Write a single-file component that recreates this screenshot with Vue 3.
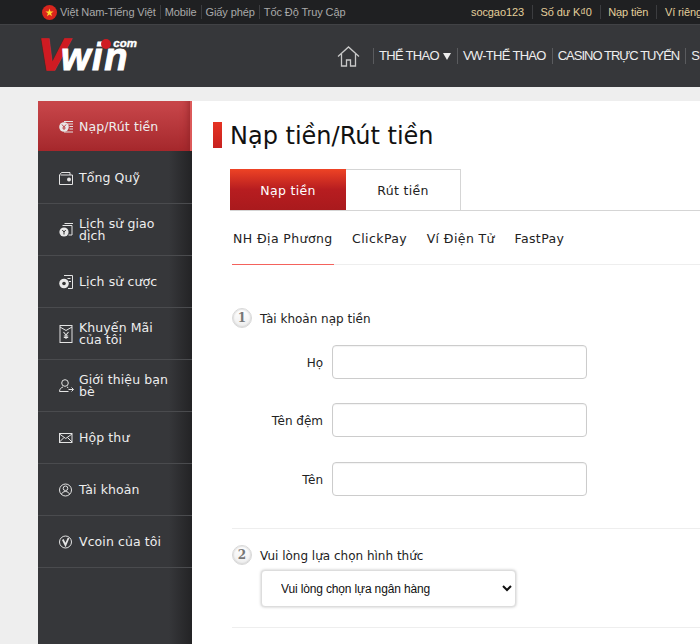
<script setup>
const topLeft = ['Việt Nam-Tiếng Việt', 'Mobile', 'Giấy phép', 'Tốc Độ Truy Cập']
const topRight = ['socgao123', 'Số dư K₫0', 'Nạp tiền', 'Ví riêng']
const nav = ['VW-THỂ THAO', 'CASINO TRỰC TUYẾN', 'SLOT GAME']
const menu = [
  { id: 'pay', label: 'Nạp/Rút tiền', active: true },
  { id: 'wallet', label: 'Tổng Quỹ' },
  { id: 'history', label: 'Lịch sử giao dịch' },
  { id: 'bets', label: 'Lịch sử cược' },
  { id: 'promo', label: 'Khuyến Mãi của tôi' },
  { id: 'refer', label: 'Giới thiệu bạn bè' },
  { id: 'mail', label: 'Hộp thư' },
  { id: 'account', label: 'Tài khoản' },
  { id: 'vcoin', label: 'Vcoin của tôi' }
]
const subs = ['NH Địa Phương', 'ClickPay', 'Ví Điện Tử', 'FastPay']
const fields = ['Họ', 'Tên đệm', 'Tên']
</script>

<template>
  <div class="page">
    <div class="topbar">
      <div class="top-left">
        <svg class="flag" width="15" height="15" viewBox="0 0 15 15">
          <circle cx="7.5" cy="7.5" r="7.5" fill="#d8251d" />
          <path d="M7.5 3.4l1 3h3.1l-2.5 1.9.9 3-2.5-1.8-2.5 1.8.9-3-2.5-1.9h3.1z" fill="#fbd92e" />
        </svg>
        <template v-for="(t, i) in topLeft" :key="t">
          <span class="tl">{{ t }}</span>
          <i v-if="i < topLeft.length - 1" class="sep" />
        </template>
      </div>
      <div class="top-right">
        <template v-for="(t, i) in topRight" :key="t">
          <span class="tr">{{ t }}</span>
          <i v-if="i < topRight.length - 1" class="sep wide" />
        </template>
      </div>
    </div>

    <div class="header">
      <div class="logo">
        <span class="logo-v">V</span><span class="logo-win">win</span>
        <span class="logo-com">com</span>
        <i class="logo-dot" />
      </div>
      <nav class="nav">
        <svg class="home" width="23" height="21" viewBox="0 0 23 21" fill="none" stroke="#c9c9c9" stroke-width="1.3">
          <path d="M1 10.5 11.5 1 22 10.5M4.5 8v12h5v-6h4v6h5V8" />
        </svg>
        <span class="nav-item first">THỂ THAO<i class="caret" /></span>
        <span v-for="n in nav" :key="n" class="nav-item" :class="{ tight: n.length > 12 }">{{ n }}</span>
      </nav>
    </div>

    <div class="main">
      <aside class="side">
        <a v-for="m in menu" :key="m.id" class="item" :class="{ active: m.active }">
          <svg class="ico" width="15" height="20" viewBox="0 0 15 20" fill="none" stroke="#e4e4e4" stroke-width="1">
            <g v-if="m.id === 'pay'">
              <circle cx="5" cy="10" r="4.800" fill="#e8e8e8" stroke="none" />
              <path d="M3 7.500 5 10l2-2.500M5 10v3M3.300 11h3.400" stroke="#b73338" stroke-width="0.900" />
              <path d="M5 4.500h9M8.500 7H14M10.500 9.500H14M10.500 12H14M5 15h9" />
            </g>
            <g v-else-if="m.id === 'wallet'">
              <path d="M.5 7V16.500H13.500V7H1.500M.5 7 2.500 4.500H11V7" />
              <circle cx="10" cy="11.500" r="2" fill="#e4e4e4" stroke="none" />
            </g>
            <g v-else-if="m.id === 'history'">
              <path d="M3.500 5.500H13V15H9.500M5.500 3.500H14" />
              <circle cx="5" cy="12" r="4.600" fill="#e8e8e8" stroke="none" />
              <path d="M3.300 10 5 12l1.700-2M5 12v2.500" stroke="#333" />
            </g>
            <g v-else-if="m.id === 'bets'">
              <path d="M5 3.500H13.500V16.500H9" />
              <path d="M8.500 6.500h3M10 9.500h2" />
              <circle cx="5" cy="11.500" r="4.800" fill="#e8e8e8" stroke="none" />
              <circle cx="5" cy="11.500" r="1.800" fill="#333" stroke="none" />
            </g>
            <g v-else-if="m.id === 'promo'">
              <rect x="1" y="1.500" width="12" height="17" />
              <path d="M1 3 7 6.500 13 3" />
              <path d="M4.500 8 7 11 9.500 8M7 11V15M4.800 12H9.200M4.800 13.500H9.200" stroke-width="1.100" />
            </g>
            <g v-else-if="m.id === 'refer'">
              <circle cx="6" cy="7" r="3.300" />
              <path d="M.5 15.500c0-2.500 1.700-4 3.500-4.500M8 11l1.300.8M.5 15.500H9.500M9.500 13.500h4.800M12.500 11.500l2 2-2 2" />
            </g>
            <g v-else-if="m.id === 'mail'">
              <rect x="0.500" y="5.500" width="12.500" height="9" />
              <path d="M.5 6 6.750 10.500 13 6M.5 14 5 9.500M13 14 8.500 9.500" />
            </g>
            <g v-else-if="m.id === 'account'">
              <circle cx="6.500" cy="10" r="6" />
              <circle cx="6.500" cy="8.300" r="2.300" />
              <path d="M2.500 14.500c.4-2 2-3 4-3s3.600 1 4 3" />
            </g>
            <g v-else>
              <circle cx="6.500" cy="10" r="6" />
              <path d="M3.800 7.500 6.500 13 9.500 6" stroke-width="1.800" />
            </g>
          </svg>
          <span class="label">{{ m.label }}</span>
        </a>
      </aside>

      <section class="content">
        <h1 class="title">Nạp tiền/Rút tiền</h1>

        <div class="tabs">
          <span class="tab on">Nạp tiền</span>
          <span class="tab">Rút tiền</span>
        </div>

        <div class="subs">
          <span v-for="(s, i) in subs" :key="s" class="sub" :class="{ on: i === 0 }">{{ s }}</span>
        </div>

        <div class="step one">
          <span class="num">1</span>
          <span class="step-t">Tài khoản nạp tiền</span>
        </div>
        <div class="fields">
          <label v-for="f in fields" :key="f" class="field">
            <span class="f-label">{{ f }}</span>
            <input class="input" type="text" />
          </label>
        </div>

        <div class="section-2">
          <div class="step">
            <span class="num">2</span>
            <span class="step-t">Vui lòng lựa chọn hình thức</span>
          </div>
          <select class="bank">
            <option>Vui lòng chọn lựa ngân hàng</option>
          </select>
        </div>
        <div class="rule" />
      </section>
    </div>
  </div>
</template>

<style>
html, body { margin: 0; overflow: hidden; background: #eeeeee; }
</style>

<style scoped>
.page {
  width: 700px;
  height: 644px;
  overflow: hidden;
  background: #eee;
  font-family: "DejaVu Sans", Verdana, sans-serif;
}
.topbar {
  height: 24px;
  background: #1f2022;
  display: flex;
  justify-content: space-between;
  align-items: center;
  padding: 0 0 0 42px;
  font-family: "Liberation Sans", Arial, sans-serif;
  font-size: 11px;
  white-space: nowrap;
  box-sizing: border-box;
}
.top-left, .top-right { display: flex; align-items: center; }
.flag { margin-right: 3px; }
.tl { color: #a9a9a9; letter-spacing: -0.1px; }
.tr { color: #e3cf9b; letter-spacing: -0.1px; }
.sep { width: 1px; height: 14px; background: #3c3d40; margin: 0 4px; }
.sep.wide { margin: 0 7.5px 0 8px; }
.top-right { margin-right: -2px; }
.header {
  height: 63px;
  background: #36373a;
  border-top: 1px solid #414245;
  box-sizing: border-box;
  display: flex;
  align-items: center;
  white-space: nowrap;
  overflow: hidden;
}
.logo {
  position: relative;
  width: 97px;
  height: 34px;
  margin: 0 3px 0 40px;
  flex: none;
  display: flex;
  align-items: flex-end;
  font-family: "Liberation Sans", Arial, sans-serif;
  font-weight: 700;
  font-style: italic;
  line-height: 34px;
}
.logo-v {
  color: #cf1b22;
  font-size: 45px;
  letter-spacing: -7px;
  margin-left: -2px;
  line-height: 36px;
  -webkit-text-stroke: 1.5px #cf1b22;
}
.logo-win {
  color: #fff;
  font-size: 38px;
  letter-spacing: 1.5px;
  line-height: 32px;
  -webkit-text-stroke: 1px #fff;
}
.logo-com {
  position: absolute;
  right: 0;
  top: 0;
  color: #fff;
  font-size: 11.5px;
  line-height: 9px;
  -webkit-text-stroke: 0.4px #fff;
}
.logo-dot {
  position: absolute;
  left: 61px;
  top: 0;
  width: 10px;
  height: 10px;
  border-radius: 50%;
  background: #cf1b22;
}
.nav {
  display: flex;
  align-items: center;
  margin-left: 197px;
  color: #eee;
  font-family: "Liberation Sans", Arial, sans-serif;
  font-size: 13px;
  letter-spacing: -0.7px;
}
.home { flex: none; margin-right: 13px; }
.nav-item {
  display: inline-flex;
  align-items: center;
  line-height: 16px;
  padding: 0 6px 0 5px;
  border-left: 1px solid #5a5b5e;
}
.nav-item.tight { letter-spacing: -1px; }
.caret {
  display: block;
  width: 0;
  height: 0;
  margin-left: 4px;
  border-style: solid;
  border-width: 7px 4px 0;
  border-color: #eee transparent transparent;
}
.main {
  display: flex;
  padding: 14px 0 0 38px;
  height: 557px;
  box-sizing: border-box;
  align-items: stretch;
}
.side {
  width: 154px;
  flex: none;
  background: linear-gradient(90deg, #36373a 85%, #232325 100%);
  padding-bottom: 20px;
}
.item {
  display: flex;
  align-items: center;
  height: 52px;
  box-sizing: border-box;
  padding: 1px 16px 0 21px;
  border-bottom: 1px solid #4a4b4e;
  color: #eee;
  font-size: 12.5px;
  line-height: 12px;
  letter-spacing: 0.1px;
}
.item.active {
  height: 50px;
  padding-top: 2px;
  background: linear-gradient(180deg, #c9474b, #a5282c);
  border-bottom: 0;
  box-shadow: inset -2px 0 0 #dc5a5a, inset -10px 0 10px -8px #8b2024;
}
.item.active + .item { height: 53px; padding-top: 2px; }
.ico { flex: none; margin-right: 5px; }
.label { display: block; }
.content {
  flex: 1;
  background: #fff;
  min-width: 0;
  padding: 0 0 0 40px;
  overflow: hidden;
  position: relative;
}
.title {
  margin: 0 0 0 -2px;
  padding-top: 18px;
  height: 51px;
  box-sizing: border-box;
  font-family: "DejaVu Sans", sans-serif;
  font-weight: 400;
  font-size: 24px;
  line-height: 34px;
  color: #111;
  white-space: nowrap;
  position: relative;
}
.title::before {
  content: "";
  position: absolute;
  left: -17px;
  top: 21px;
  width: 9px;
  height: 26px;
  background: linear-gradient(180deg, #e63323, #c7211f);
}
.tabs {
  margin: 17px 0 0 -2px;
  display: flex;
  height: 42px;
  box-sizing: border-box;
  border-bottom: 1px solid #d5d5d5;
}
.tab {
  width: 115px;
  height: 41px;
  box-sizing: border-box;
  border: 1px solid #d5d5d5;
  border-left: 0;
  border-bottom: 0;
  display: flex;
  align-items: center;
  justify-content: center;
  font-size: 12.5px;
  color: #222;
  letter-spacing: 0.3px;
}
.tab.on {
  width: 116px;
  padding-top: 1px;
  color: #fff;
  border: 0;
  background: linear-gradient(180deg, #ee4325, #b71d20 50%, #a91a1d);
}
.subs {
  display: flex;
  align-items: flex-start;
  height: 54px;
  box-sizing: border-box;
  border-bottom: 1px solid #eee;
  font-size: 12.5px;
  color: #222;
  letter-spacing: 0.4px;
}
.sub {
  height: 54px;
  box-sizing: border-box;
  margin-right: 17.5px;
  padding: 18px 1px 0;
  line-height: 20px;
  white-space: nowrap;
}
.sub.on { border-bottom: 1px solid #f4625c; }
.step {
  display: flex;
  align-items: center;
  font-size: 12px;
  color: #222;
  height: 20px;
}
.step.one { margin-top: 43px; }
.step-t { padding-top: 1px; }
.num {
  width: 20px;
  height: 20px;
  box-sizing: border-box;
  border: 1px solid #d8d8d8;
  border-radius: 50%;
  background: linear-gradient(180deg, #fff, #eee);
  box-shadow: inset 0 0 2px #bbb;
  display: flex;
  align-items: center;
  justify-content: center;
  font: 700 12px "DejaVu Serif", serif;
  color: #777;
  margin-right: 8px;
}
.fields {
  display: flex;
  flex-direction: column;
  gap: 24px;
  margin-top: 17px;
}
.field {
  display: flex;
  align-items: center;
  height: 34px;
}
.field:last-child { margin-top: 1px; }
.f-label {
  width: 91px;
  padding-top: 1px;
  text-align: right;
  font-size: 12px;
  color: #222;
}
.input {
  margin-left: 9px;
  width: 255px;
  height: 34px;
  box-sizing: border-box;
  border: 1px solid #ccc;
  border-radius: 4px;
  background: #fff;
  padding: 0;
  box-shadow: inset 0 1px 1px rgba(0, 0, 0, .05);
}
.section-2 {
  margin-top: 32px;
  border-top: 1px solid #eee;
  padding-top: 16px;
}
.bank {
  display: block;
  margin: 5px 0 0 29px;
  width: 255px;
  height: 37px;
  box-sizing: border-box;
  border: 1px solid #ddd;
  border-radius: 4px;
  background: #fff;
  padding: 0 15px;
  font-family: "Liberation Sans", Arial, sans-serif;
  font-size: 12px;
  letter-spacing: -0.15px;
  color: #111;
  box-shadow: 0 0 3px rgba(0, 0, 0, .25);
}
.rule {
  margin-top: 20px;
  border-top: 1px solid #eee;
}
</style>
